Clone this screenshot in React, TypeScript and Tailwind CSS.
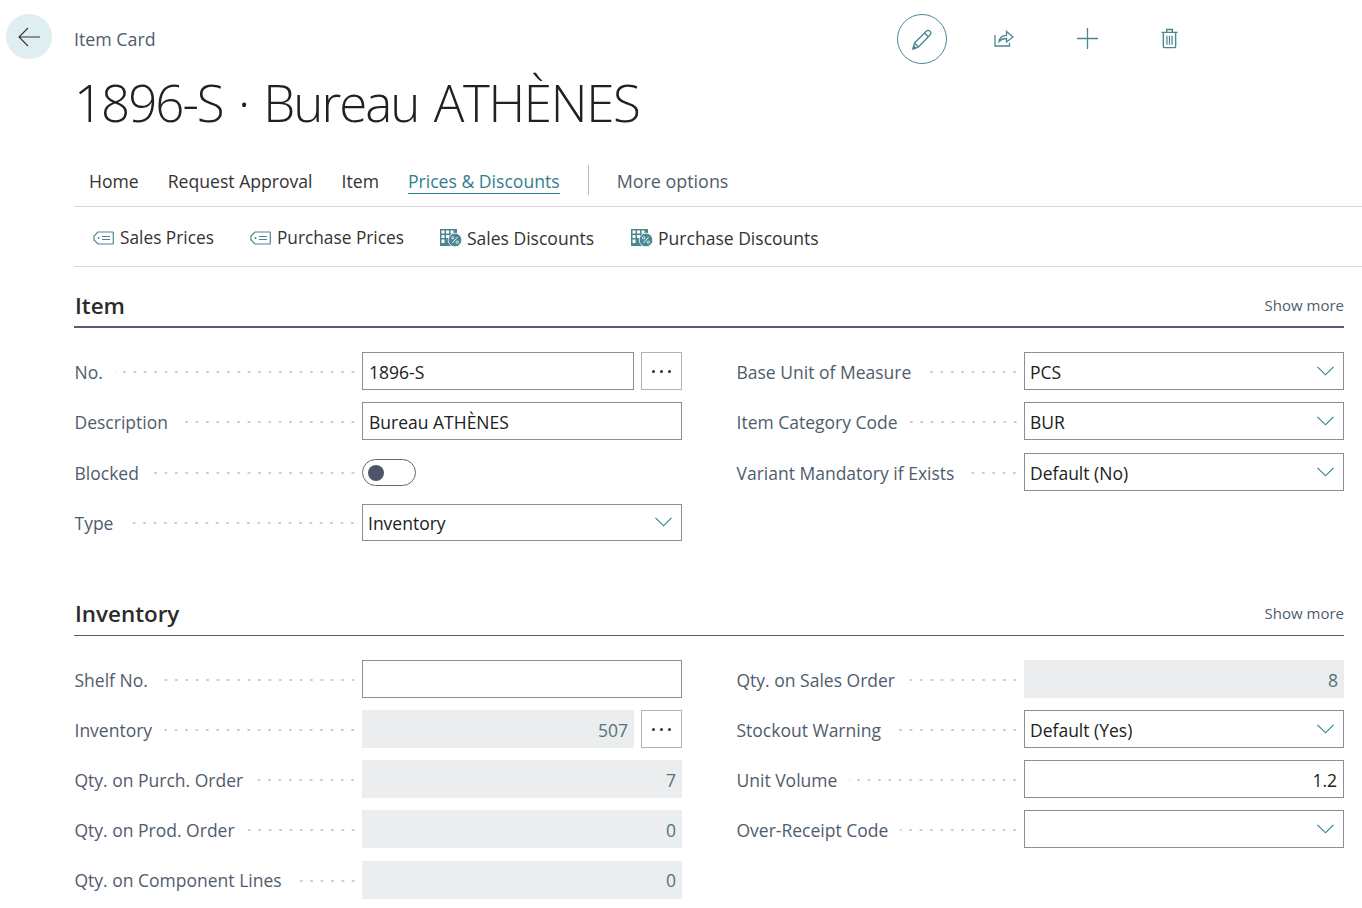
import React from 'react';

const font = "font-['Open_Sans','Noto_Sans',sans-serif]";

const BackIcon = () => (
  <svg width="22" height="20" viewBox="0 0 22 20" fill="none" stroke="#333" strokeWidth="1.1">
    <path d="M1 10h21M10 1l-9 9 9 9" />
  </svg>
);

const PencilIcon = () => (
  <svg width="20" height="21" viewBox="0 0 20 21" fill="none" stroke="#4b8791" strokeWidth="1.3" strokeLinejoin="round">
    <path d="M1 20l1.500-6L14.500 2a2.200 2.200 0 0 1 3.200 0l.500.500a2.200 2.200 0 0 1 0 3.200L6.500 18z" />
    <path d="M12.500 4l4 4M2.500 14l4 4" />
    <path d="M1 20l.800-3 2.200 2.200z" fill="#4b8791" />
  </svg>
);

const ShareIcon = () => (
  <svg width="20" height="19" viewBox="0 0 20 19" fill="none" stroke="#4b8791" strokeWidth="1.3">
    <path d="M1 7v11h14.500v-3" />
    <path d="M5 13.500c.5-4 3-6 7.500-6.200V3.500L19 9l-6.500 5v-3.500c-3-.2-5.500.8-7.500 3z" />
  </svg>
);

const PlusIcon = () => (
  <svg width="21" height="21" viewBox="0 0 21 21" fill="none" stroke="#4b8791" strokeWidth="1.300">
    <path d="M10.500 0v21M0 10.500h21" />
  </svg>
);

const TrashIcon = () => (
  <svg width="17" height="21" viewBox="0 0 18 22" fill="none" stroke="#4b8791" strokeWidth="1.500">
    <path d="M0.500 4.500h17M6 4V1.500h6V4M2.500 5v14.500a1.200 1.200 0 0 0 1.200 1.200h10.600a1.200 1.200 0 0 0 1.200-1.200V5" />
    <path d="M6.300 8v9.500M9 8v9.500M11.700 8v9.500" strokeWidth="1.300" />
  </svg>
);

const TagIcon = () => (
  <svg width="21" height="14" viewBox="0 0 21 14" fill="none" stroke="#4b8791" strokeWidth="1.200">
    <path d="M5 1h14.500a.8.800 0 0 1 .8.800v10.400a.8.800 0 0 1-.8.800H5L1 9V5z" />
    <path d="M9 5.500h8M9 8.500h8" />
    <circle cx="5.500" cy="7" r="1" fill="#4b8791" stroke="none" />
  </svg>
);

const DiscountIcon = () => (
  <svg width="22" height="18" viewBox="0 0 22 18">
    <rect x="0" y="0" width="17" height="17" fill="#4b8791" />
    <path d="M1.500 1.500h3v3h-3zM6 1.500h3v3H6zM10.500 1.500h3v3h-3zM1.500 6h3v3h-3zM1.500 10.500h3V14h-3zM6 6h3v3H6z" fill="#fff" />
    <circle cx="15" cy="11" r="6.800" fill="#4b8791" stroke="#fff" strokeWidth="0.800" />
    <path d="M12.300 14l5.400-6" stroke="#fff" strokeWidth="0.900" />
    <circle cx="12.700" cy="8.800" r="1.200" fill="none" stroke="#fff" strokeWidth="0.800" />
    <circle cx="17.300" cy="13.200" r="1.200" fill="none" stroke="#fff" strokeWidth="0.800" />
  </svg>
);

const Chevron = () => (
  <svg width="17" height="10" viewBox="0 0 17 10" fill="none" stroke="#2f7f8b" strokeWidth="1.100" className="shrink-0">
    <path d="M0.500 0.800l8 8 8-8" />
  </svg>
);

type FieldProps = { label: string; size?: string; children: React.ReactNode };

const Field = ({ label, size = 'h-[38px]', children }: FieldProps) => (
  <div className={`flex items-center ${size}`}>
    <span className="w-[280px] flex items-center shrink-0 pt-[2px] pl-[0.500px]">
      <span className="text-[17.500px] text-[#505c6d] whitespace-nowrap">{label}</span>
      <span className="flex-1 ml-3 -mr-[4px] h-[4px] bg-right bg-[radial-gradient(circle,#c8c8c8_1px,transparent_1.300px)] bg-[length:10.400px_4px]" />
    </span>
    <div className="ml-2 w-[320px] flex gap-[7px] h-full">{children}</div>
  </div>
);

const Input = ({ value = '', right = false }: { value?: string; right?: boolean }) => (
  <div className={`flex-1 border border-[#8a8f97] flex items-center px-[6px] pt-[2px] text-[17.500px] text-[#212121] ${right ? 'justify-end' : ''}`}>
    {value}
  </div>
);

const ReadOnly = ({ value }: { value: string }) => (
  <div className="flex-1 bg-[#ebedef] flex items-center justify-end px-[6px] pt-[2px] text-[17.500px] text-[#50747c]">{value}</div>
);

const Select = ({ value = '' }: { value?: string }) => (
  <div className="flex-1 border border-[#8a8f97] flex items-center justify-between pl-[5px] pr-[9px] text-[17.500px] text-[#212121]">
    <span className="pt-[2px]">{value}</span>
    <Chevron />
  </div>
);

const Dots = () => (
  <div className="w-[41px] border border-[#b0b2b5] flex items-center justify-center gap-[5px]">
    <span className="w-[3px] h-[3px] rounded-full bg-[#333]" />
    <span className="w-[3px] h-[3px] rounded-full bg-[#333]" />
    <span className="w-[3px] h-[3px] rounded-full bg-[#333]" />
  </div>
);

const Toggle = () => (
  <div className="flex items-center h-full pt-[2px]">
    <div className="w-[54px] h-[27px] rounded-full border border-[#5f6672] flex items-center pl-[5px]">
      <span className="w-[16px] h-[16px] rounded-full bg-[#4d5666]" />
    </div>
  </div>
);

const SectionHeader = ({ title, thick = false }: { title: string; thick?: boolean }) => (
  <div className={`flex items-center justify-between h-[43px] border-[#555c6b] mr-[18px] ${thick ? 'border-b-2' : 'border-b'}`}>
    <span className="pl-px text-[22.400px] font-semibold text-[#2b2b2b]">{title}</span>
    <span className={`text-[15px] text-[#505c6d] ${thick ? '' : 'pb-[2px]'}`}>Show more</span>
  </div>
);

const App = () => {
  return (
    <div className={`w-[1362px] h-[908px] overflow-hidden bg-white ${font}`}>
      <div className="flex h-[64px]">
        <div className="w-[74px] pl-[6px] pt-[14px]">
          <div className="w-[46px] h-[45px] rounded-full bg-[#dfeef1] flex items-center justify-center">
            <BackIcon />
          </div>
        </div>
        <div className="w-[823px] pt-[27px] text-[17.800px] leading-[24px] text-[#505c6d]">Item Card</div>
        <div className="pt-[14px] flex items-start">
          <div className="w-[50px] h-[50px] rounded-full border border-[#4b8791] flex items-center justify-center">
            <PencilIcon />
          </div>
          <div className="ml-[47px] pt-[14px]"><ShareIcon /></div>
          <div className="ml-[63px] pt-[14px]"><PlusIcon /></div>
          <div className="ml-[63px] pt-[14px]"><TrashIcon /></div>
        </div>
      </div>

      <div className="pl-[74px]">
        <h1 className="mt-[3px] text-[51px] leading-[70px] tracking-[-2px] [word-spacing:4px] font-light text-[#212121] h-[70px]">
          1896-S · Bureau <span className="tracking-[-1.300px]">ATHÈNES</span>
        </h1>

        <div className="mt-[21px] h-[49px] pl-[15px] flex items-start border-b border-[#d6d6d6] text-[17.600px] text-[#333]">
          <span className="pt-[10px]">Home</span>
          <span className="ml-[29px] pt-[10px]">Request Approval</span>
          <span className="ml-[29px] pt-[10px]">Item</span>
          <span className="ml-[29px] pt-[10px] h-[36px] border-b border-[#2f7f8b] text-[#2f7f8b]">Prices &amp; Discounts</span>
          <span className="ml-[28px] mt-[7px] w-px h-[30px] bg-[#bdbdbd]" />
          <span className="ml-[28px] pt-[10px] text-[17.900px] text-[#505c6d]">More options</span>
        </div>

        <div className="h-[60px] pl-[19px] pt-[3px] flex items-center border-b border-[#d6d6d6] text-[17.300px] leading-[24px] text-[#333]">
          <span className="flex items-center gap-[6px]"><TagIcon />Sales Prices</span>
          <span className="ml-[36px] flex items-center gap-[6px]"><TagIcon />Purchase Prices</span>
          <span className="ml-[36px] flex items-center gap-[5px] text-[17.550px] leading-[24px]"><DiscountIcon />Sales Discounts</span>
          <span className="ml-[37px] flex items-center gap-[5px] text-[17.550px] leading-[24px]"><DiscountIcon />Purchase Discounts</span>
        </div>

        <section className="mt-[18px]">
          <SectionHeader title="Item" thick />
          <div className="mt-[24px] grid grid-cols-[608px_608px] gap-x-[54px]">
            <div className="flex flex-col gap-[12.400px]">
              <Field label="No."><Input value="1896-S" /><Dots /></Field>
              <Field label="Description"><Input value="Bureau ATHÈNES" /></Field>
              <Field label="Blocked"><Toggle /></Field>
              <Field label="Type" size="h-[37px] mt-[0.800px]"><Select value="Inventory" /></Field>
            </div>
            <div className="flex flex-col gap-[12.400px]">
              <Field label="Base Unit of Measure"><Select value="PCS" /></Field>
              <Field label="Item Category Code"><Select value="BUR" /></Field>
              <Field label="Variant Mandatory if Exists"><Select value="Default (No)" /></Field>
            </div>
          </div>
        </section>

        <section className="mt-[52px]">
          <SectionHeader title="Inventory" />
          <div className="mt-[24px] grid grid-cols-[608px_608px] gap-x-[54px]">
            <div className="flex flex-col gap-[12.150px]">
              <Field label="Shelf No."><Input /></Field>
              <Field label="Inventory"><ReadOnly value="507" /><Dots /></Field>
              <Field label="Qty. on Purch. Order"><ReadOnly value="7" /></Field>
              <Field label="Qty. on Prod. Order"><ReadOnly value="0" /></Field>
              <Field label="Qty. on Component Lines"><ReadOnly value="0" /></Field>
            </div>
            <div className="flex flex-col gap-[12.150px]">
              <Field label="Qty. on Sales Order"><ReadOnly value="8" /></Field>
              <Field label="Stockout Warning"><Select value="Default (Yes)" /></Field>
              <Field label="Unit Volume"><Input value="1.2" right /></Field>
              <Field label="Over-Receipt Code"><Select /></Field>
            </div>
          </div>
        </section>
      </div>
    </div>
  );
};

export default App;
